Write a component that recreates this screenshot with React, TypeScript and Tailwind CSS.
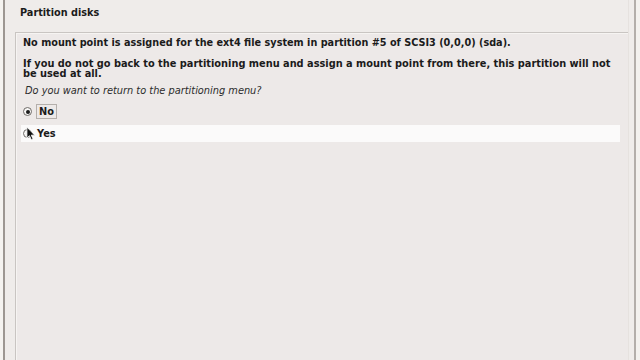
import React from "react";

function Radio({ checked }: { checked?: boolean }) {
  return (
    <span className="flex h-[9px] w-[9px] items-center justify-center rounded-full border border-[#6f6b68] bg-[#f7f6f5]">
      {checked && <span className="h-[4px] w-[4px] rounded-full bg-[#1c1c1c]" />}
    </span>
  );
}

function Pointer() {
  return (
    <svg className="absolute left-[3px] top-[-3px]" width="10" height="15" viewBox="0 0 11 16">
      <path d="M1 1 L1 13 L3.8 10.4 L5.9 15 L7.8 14.1 L5.8 9.8 L9.6 9.8 Z" fill="#111" stroke="#fff" strokeWidth="0.9" strokeLinejoin="round" />
    </svg>
  );
}

export default function App() {
  return (
    <div className="flex h-[360px] w-[640px] overflow-hidden bg-[#efecea] font-['DejaVu_Sans',sans-serif] text-[#1b1b1b]">
      <div className="w-[3px] bg-[#f5f3f0]" />
      <div className="w-[2px] bg-[#9d9792]" />

      <div className="flex flex-1 flex-col">
        <div className="flex h-[26px] items-center pl-[15px] text-[9.7px] font-bold">
          Partition disks
        </div>

        <div className="ml-[10px] mt-[6px] flex-1 border-l border-t border-[#c9c5c2] bg-[#ede9e8]">
          <div className="h-full border-l border-t border-[#f6f4f2] px-[6px] pt-[3px]">
            <p className="text-[9.7px] font-bold leading-[11px]">
              No mount point is assigned for the ext4 file system in partition #5 of SCSI3 (0,0,0) (sda).
            </p>
            <p className="mt-[11px] text-[9.8px] font-bold leading-[10px]">
              If you do not go back to the partitioning menu and assign a mount point from there, this partition will not
              <br />
              be used at all.
            </p>
            <p className="mt-[6px] pl-[2px] text-[9.8px] italic leading-[11px] text-[#2c2c2c]">
              Do you want to return to the partitioning menu?
            </p>

            <div className="mt-[7px] flex h-[17px] items-center gap-[4px]">
              <Radio checked />
              <span className="border border-[#b4afab] px-[2px] text-[9.8px] font-bold leading-[13px]">No</span>
            </div>

            <div className="-ml-[2px] mr-[2px] mt-[5px] flex h-[17px] items-center gap-[4px] bg-[#fbfafa] pl-[2px]">
              <span className="relative">
                <Radio />
                <Pointer />
              </span>
              <span className="pl-[1px] text-[9.8px] font-bold leading-[13px]">Yes</span>
            </div>
          </div>
        </div>
      </div>

      <div className="w-[1px] bg-[#e6e2df]" />
      <div className="w-[5px] bg-[#efecea]" />
      <div className="w-[2px] bg-[#b3aeaa]" />
      <div className="w-[4px] bg-[#f3f1ee]" />
    </div>
  );
}
